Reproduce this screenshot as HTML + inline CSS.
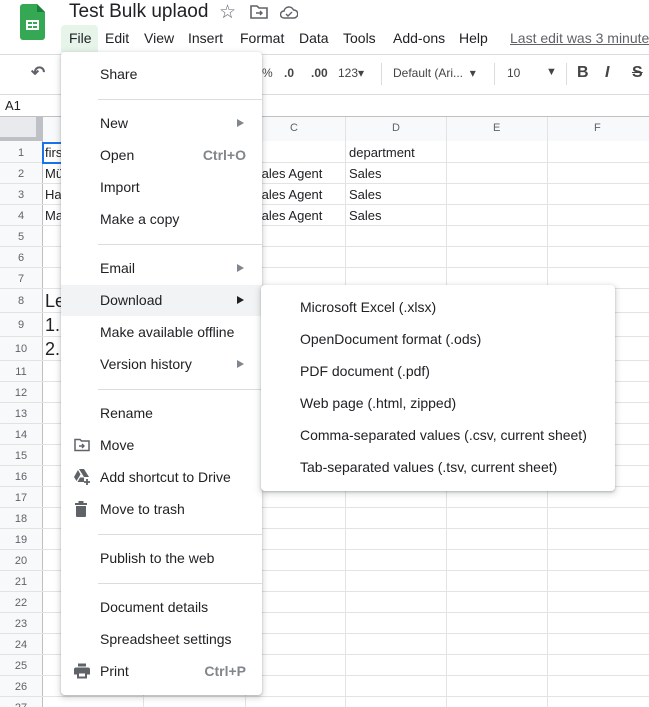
<!DOCTYPE html>
<html><head><meta charset="utf-8"><style>
*{box-sizing:border-box;margin:0;padding:0}
html,body{width:649px;height:707px;overflow:hidden}
body{background:#fff;font-family:"Liberation Sans",Arial,sans-serif;color:#202124;position:relative}
.abs{position:absolute}
.t{position:absolute;white-space:nowrap}
.menu{position:absolute;background:#fff;border-radius:4px;box-shadow:0 2px 6px 2px rgba(60,64,67,.15),0 1px 2px rgba(60,64,67,.3)}
.mi{position:absolute;left:39px;font-size:14px;color:#202124;white-space:nowrap;transform:translateY(-50%)}
.sc{position:absolute;right:16px;font-size:14px;color:#80868b;transform:translateY(-50%);font-weight:bold}
.ar{position:absolute;left:176px;width:0;height:0;border-left:7px solid #80868b;border-top:4px solid transparent;border-bottom:4px solid transparent;transform:translateY(-50%)}
.sep{position:absolute;left:37px;right:0;height:1px;background:#dadce0}
.ic{position:absolute;left:13px;transform:translateY(-50%)}
#wrap{position:absolute;left:0;top:0;width:649px;height:707px;overflow:hidden}
</style></head><body><div id="wrap">
<svg class="abs" style="left:20px;top:4px" width="25" height="36" viewBox="0 0 25 36"><path d="M3 0H17L25 8V33a3 3 0 0 1-3 3H3a3 3 0 0 1-3-3V3a3 3 0 0 1 3-3z" fill="#34a853"/><path d="M17 0L25 8H17z" fill="#188038"/><rect x="6" y="16" width="13" height="10" fill="#fff"/><rect x="8" y="18" width="4" height="2" fill="#34a853"/><rect x="13" y="18" width="4" height="2" fill="#34a853"/><rect x="8" y="22" width="4" height="2" fill="#34a853"/><rect x="13" y="22" width="4" height="2" fill="#34a853"/></svg>
<div class="t" style="left:69px;top:1px;font-size:19px">Test Bulk uplaod</div>
<div class="t" style="left:219px;top:1px;font-size:19px;color:#5f6368">☆</div>
<svg class="abs" style="left:250px;top:5px" width="18" height="14" viewBox="0 0 18 14"><path d="M1 1h6l2 2h8v10H1z" fill="none" stroke="#5f6368" stroke-width="1.6"/><path d="M6 8h6M10 6l2 2-2 2" fill="none" stroke="#5f6368" stroke-width="1.4"/></svg>
<svg class="abs" style="left:280px;top:5px" width="18" height="14" viewBox="0 0 18 14"><path d="M4 13a3.5 3.5 0 0 1 0-7 5 5 0 0 1 9.5-1A4 4 0 0 1 14 13z" fill="none" stroke="#5f6368" stroke-width="1.5"/><path d="M6 9l2 2 4-4" fill="none" stroke="#5f6368" stroke-width="1.4"/></svg>
<div class="abs" style="left:61px;top:25px;width:37px;height:27px;background:#e6f4ea;border-radius:4px 4px 0 0"></div>
<div class="t" style="left:69px;top:30px;font-size:14px">File</div>
<div class="t" style="left:105px;top:30px;font-size:14px">Edit</div>
<div class="t" style="left:144px;top:30px;font-size:14px">View</div>
<div class="t" style="left:188px;top:30px;font-size:14px">Insert</div>
<div class="t" style="left:240px;top:30px;font-size:14px">Format</div>
<div class="t" style="left:299px;top:30px;font-size:14px">Data</div>
<div class="t" style="left:343px;top:30px;font-size:14px">Tools</div>
<div class="t" style="left:393px;top:30px;font-size:14px">Add-ons</div>
<div class="t" style="left:459px;top:30px;font-size:14px">Help</div>
<div class="abs" style="left:510px;top:30px;width:139px;height:20px;overflow:hidden"><div class="t" style="left:0;top:0;font-size:14px;color:#5f6368;text-decoration:underline">Last edit was 3 minutes ago</div></div>
<div class="abs" style="left:0;top:54px;width:649px;height:1px;background:#dadce0"></div>
<div class="t" style="left:31px;top:63px;font-size:17px;color:#5f6368;font-weight:bold">↶</div>
<div class="t" style="left:262px;top:66px;font-size:12px;color:#444">%</div>
<div class="t" style="left:284px;top:66px;font-size:12px;color:#444;font-weight:bold">.0</div>
<div class="t" style="left:311px;top:66px;font-size:12px;color:#444;font-weight:bold">.00</div>
<div class="t" style="left:338px;top:66px;font-size:12px;color:#444">123▾</div>
<div class="abs" style="left:381px;top:63px;width:1px;height:22px;background:#dadce0"></div>
<div class="t" style="left:393px;top:66px;font-size:12px;color:#444">Default (Ari...&nbsp; ▾</div>
<div class="abs" style="left:494px;top:63px;width:1px;height:22px;background:#dadce0"></div>
<div class="t" style="left:507px;top:66px;font-size:12px;color:#444">10</div>
<div class="t" style="left:546px;top:66px;font-size:11px;color:#444">▼</div>
<div class="abs" style="left:566px;top:63px;width:1px;height:22px;background:#dadce0"></div>
<div class="t" style="left:577px;top:64px;font-size:16px;color:#444;font-weight:bold">B</div>
<div class="t" style="left:605px;top:64px;font-size:16px;color:#444;font-weight:bold;font-style:italic">I</div>
<div class="t" style="left:632px;top:64px;font-size:16px;color:#444;font-weight:bold;text-decoration:line-through">S</div>
<div class="abs" style="left:0;top:94px;width:649px;height:1px;background:#dadce0"></div>
<div class="t" style="left:5px;top:98px;font-size:13px">A1</div>
<div class="abs" style="left:0;top:116px;width:649px;height:1px;background:#c0c0c0"></div>
<div class="abs" style="left:0;top:117px;width:649px;height:24px;background:#f8f9fa"></div>
<div class="abs" style="left:0;top:117px;width:42px;height:590px;background:#f8f9fa"></div>
<div class="abs" style="left:0;top:117px;width:42px;height:24px;background:#e8eaed"></div>
<div class="abs" style="left:36px;top:117px;width:6px;height:24px;background:#bdc1c6"></div>
<div class="abs" style="left:0;top:137px;width:42px;height:4px;background:#bdc1c6"></div>
<div id="grid"></div>
<div class="t" style="left:290px;top:122px;font-size:11px;color:#5f6368">C</div>
<div class="t" style="left:392px;top:122px;font-size:11px;color:#5f6368">D</div>
<div class="t" style="left:493px;top:122px;font-size:11px;color:#5f6368">E</div>
<div class="t" style="left:594px;top:122px;font-size:11px;color:#5f6368">F</div>
<div class="abs" style="left:42px;top:142px;width:102px;height:22px;border:2px solid #1a73e8"></div>
<div class="t" style="left:45px;top:145px;font-size:13px">first</div>
<div class="t" style="left:45px;top:166px;font-size:13px">Mü</div>
<div class="t" style="left:45px;top:187px;font-size:13px">Ha</div>
<div class="t" style="left:45px;top:208px;font-size:13px">Ma</div>
<div class="t" style="left:45px;top:291px;font-size:18px">Le</div>
<div class="t" style="left:45px;top:315px;font-size:18px">1.</div>
<div class="t" style="left:45px;top:339px;font-size:18px">2.</div>
<div class="t" style="left:255px;top:145px;font-size:13px">e</div>
<div class="t" style="left:253px;top:166px;font-size:13px">Sales Agent</div>
<div class="t" style="left:253px;top:187px;font-size:13px">Sales Agent</div>
<div class="t" style="left:253px;top:208px;font-size:13px">Sales Agent</div>
<div class="t" style="left:349px;top:145px;font-size:13px">department</div>
<div class="t" style="left:349px;top:166px;font-size:13px">Sales</div>
<div class="t" style="left:349px;top:187px;font-size:13px">Sales</div>
<div class="t" style="left:349px;top:208px;font-size:13px">Sales</div>
<div class="menu" style="left:61px;top:52px;width:201px;height:643px">
<div class="mi" style="top:22px">Share</div>
<div class="sep" style="top:47px"></div>
<div class="mi" style="top:71px">New</div><div class="ar" style="top:71px"></div>
<div class="mi" style="top:103px">Open</div><div class="sc" style="top:103px">Ctrl+O</div>
<div class="mi" style="top:135px">Import</div>
<div class="mi" style="top:167px">Make a copy</div>
<div class="sep" style="top:192px"></div>
<div class="mi" style="top:216px">Email</div><div class="ar" style="top:216px"></div>
<div class="abs" style="left:0;top:233px;width:201px;height:31px;background:#f1f3f4"></div>
<div class="mi" style="top:248px">Download</div><div class="ar" style="top:248px;border-left-color:#202124"></div>
<div class="mi" style="top:280px">Make available offline</div>
<div class="mi" style="top:312px">Version history</div><div class="ar" style="top:312px"></div>
<div class="sep" style="top:337px"></div>
<div class="mi" style="top:361px">Rename</div>
<svg class="ic" style="top:393px" width="16" height="13" viewBox="0 0 16 13"><path d="M1 1h5l1.5 1.5H15v9.5H1z" fill="none" stroke="#5f6368" stroke-width="1.5"/><path d="M5 7.5h5M8 5.5l2 2-2 2" fill="none" stroke="#5f6368" stroke-width="1.4"/></svg>
<div class="mi" style="top:393px">Move</div>
<svg class="ic" style="top:425px" width="17" height="16" viewBox="0 0 17 16"><path d="M5 0h5l5 8h-5zM4 1l2.5 4.5L2.5 12 0 8zM3.5 13l2.5-4.5H10v4.5z" fill="#5f6368"/><path d="M13 10v6M10 13h6" stroke="#5f6368" stroke-width="1.8"/></svg>
<div class="mi" style="top:425px">Add shortcut to Drive</div>
<svg class="ic" style="top:457px" width="14" height="16" viewBox="0 0 14 16"><path d="M1 2h12v2H1zM4.5 0h5v2h-5zM2 5h10v10a1 1 0 0 1-1 1H3a1 1 0 0 1-1-1z" fill="#5f6368"/></svg>
<div class="mi" style="top:457px">Move to trash</div>
<div class="sep" style="top:482px"></div>
<div class="mi" style="top:506px">Publish to the web</div>
<div class="sep" style="top:531px"></div>
<div class="mi" style="top:555px">Document details</div>
<div class="mi" style="top:587px">Spreadsheet settings</div>
<svg class="ic" style="top:619px" width="16" height="15" viewBox="0 0 16 15"><path d="M4 0h8v3H4zM2 4h12a2 2 0 0 1 2 2v5h-3v4H3v-4H0V6a2 2 0 0 1 2-2z" fill="#5f6368"/><rect x="5" y="10" width="6" height="3" fill="#fff"/></svg>
<div class="mi" style="top:619px">Print</div><div class="sc" style="top:619px">Ctrl+P</div>
</div>
<div class="menu" style="left:261px;top:285px;width:354px;height:206px">
<div class="mi" style="top:22px">Microsoft Excel (.xlsx)</div>
<div class="mi" style="top:54px">OpenDocument format (.ods)</div>
<div class="mi" style="top:86px">PDF document (.pdf)</div>
<div class="mi" style="top:118px">Web page (.html, zipped)</div>
<div class="mi" style="top:150px">Comma-separated values (.csv, current sheet)</div>
<div class="mi" style="top:182px">Tab-separated values (.tsv, current sheet)</div>
</div>
</div>
<script>
var g=document.getElementById('grid'),h='';
var cols=[42,143,245,345,446,547];
cols.forEach(function(x){h+='<div class="abs" style="left:'+x+'px;top:117px;width:1px;height:590px;background:'+(x==42?'#c0c0c0':'#e2e3e3')+'"></div>';});
var y=142;
for(var r=1;r<=27;r++){var hh=(r>=8&&r<=10)?24:21;
h+='<div class="abs" style="left:0;top:'+(y+hh-1)+'px;width:649px;height:1px;background:#e2e3e3"></div>';
h+='<div class="t" style="left:0;width:42px;text-align:center;top:'+(y+hh/2-6)+'px;font-size:11px;color:#5f6368">'+r+'</div>';
y+=hh;}
g.innerHTML=h;
</script>
</body></html>
